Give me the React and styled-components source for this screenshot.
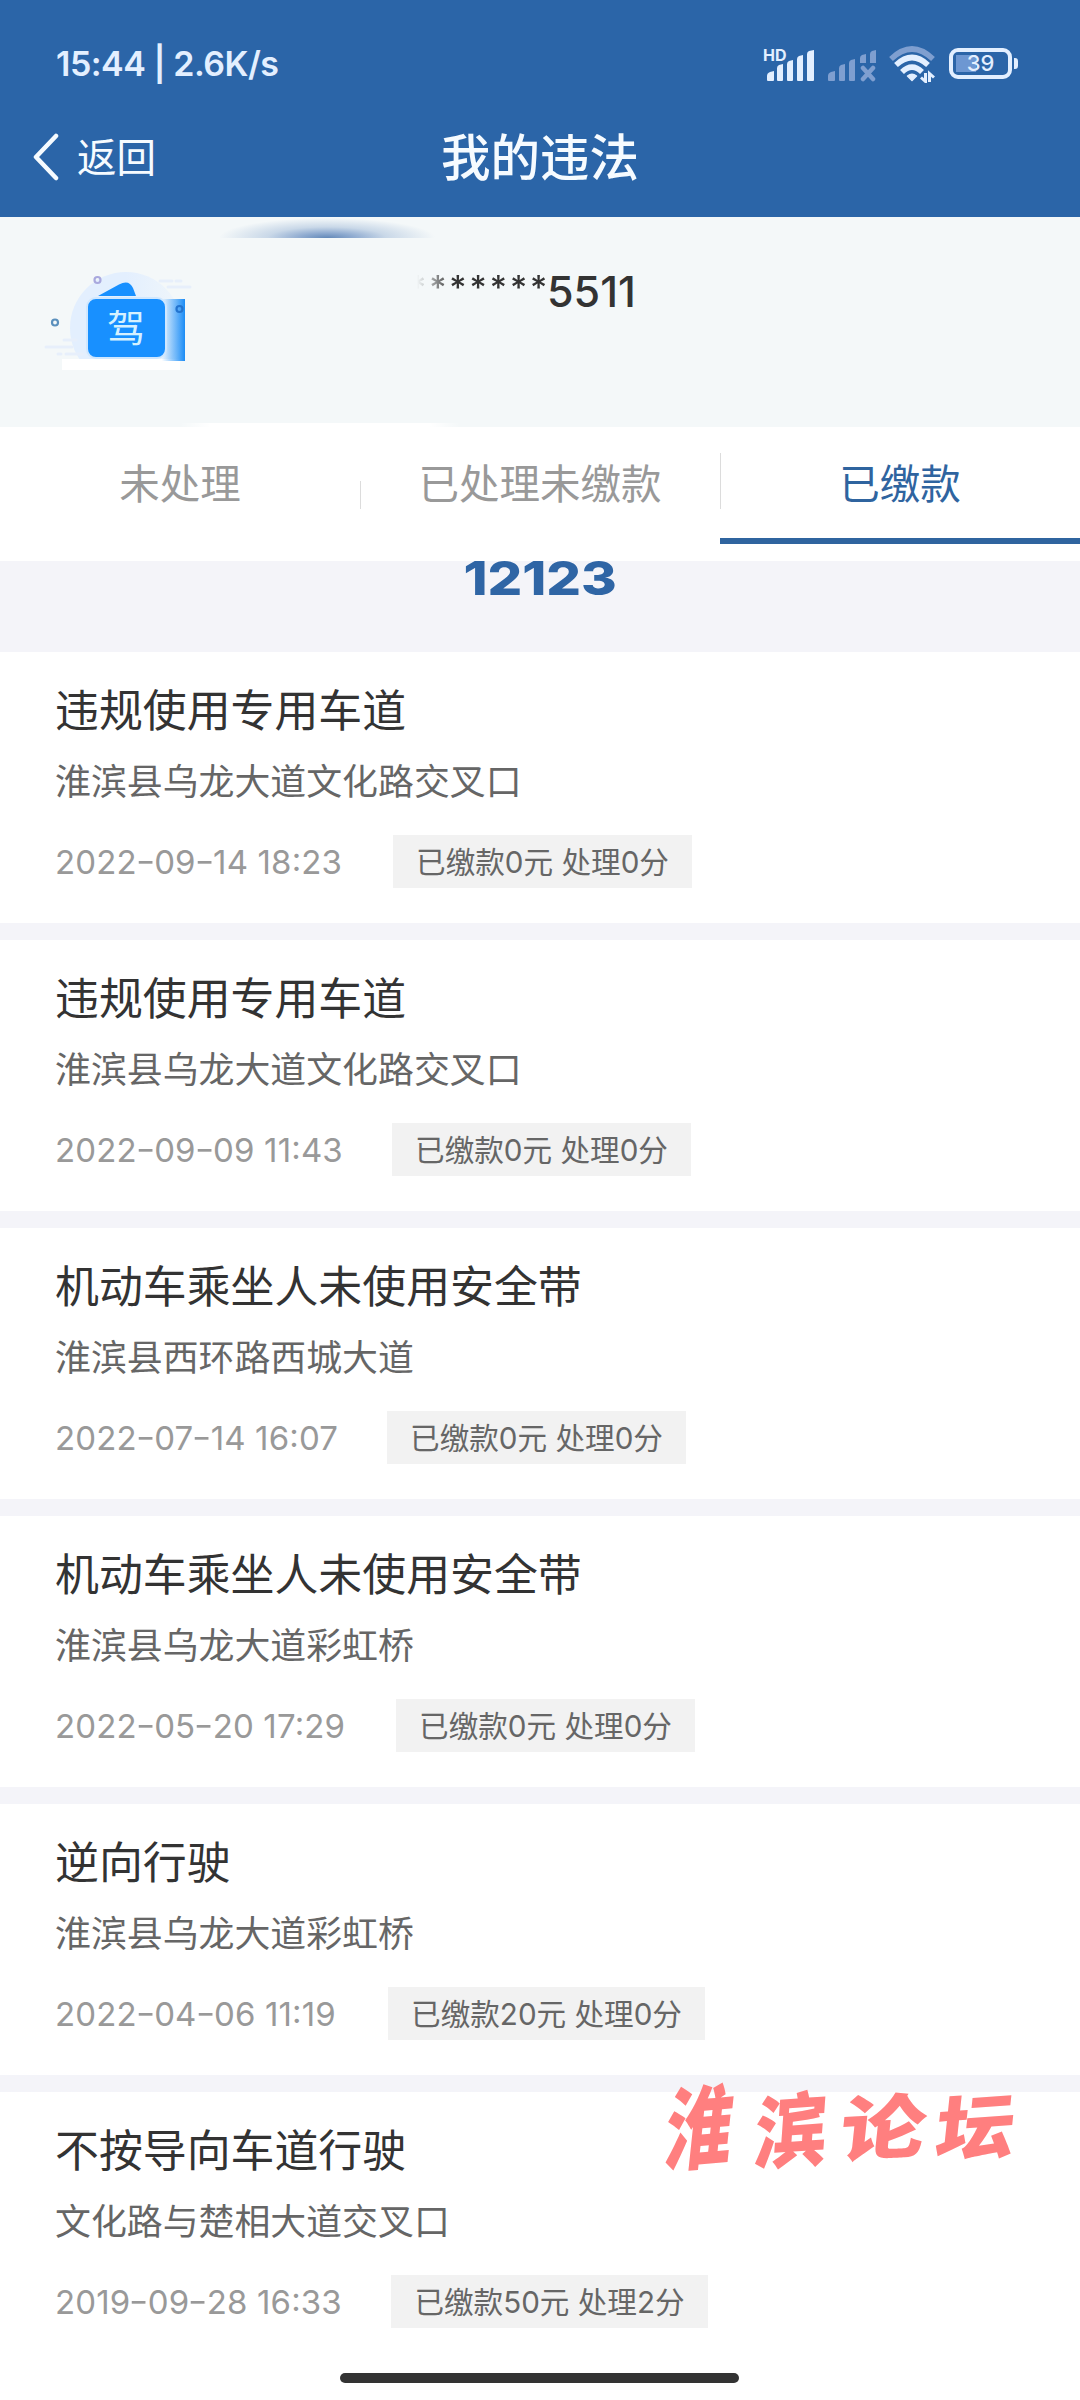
import styled, { createGlobalStyle } from "styled-components";

const violations = [
  {
    title: "违规使用专用车道",
    place: "淮滨县乌龙大道文化路交叉口",
    date: "2022-09-14 18:23",
    money: 0,
    points: 0,
    dateWidth: 337,
  },
  {
    title: "违规使用专用车道",
    place: "淮滨县乌龙大道文化路交叉口",
    date: "2022-09-09 11:43",
    money: 0,
    points: 0,
    dateWidth: 336,
  },
  {
    title: "机动车乘坐人未使用安全带",
    place: "淮滨县西环路西城大道",
    date: "2022-07-14 16:07",
    money: 0,
    points: 0,
    dateWidth: 331,
  },
  {
    title: "机动车乘坐人未使用安全带",
    place: "淮滨县乌龙大道彩虹桥",
    date: "2022-05-20 17:29",
    money: 0,
    points: 0,
    dateWidth: 340,
  },
  {
    title: "逆向行驶",
    place: "淮滨县乌龙大道彩虹桥",
    date: "2022-04-06 11:19",
    money: 20,
    points: 0,
    dateWidth: 332,
  },
  {
    title: "不按导向车道行驶",
    place: "文化路与楚相大道交叉口",
    date: "2019-09-28 16:33",
    money: 50,
    points: 2,
    dateWidth: 335,
  },
];

function Signal() {
  return (
    <svg width="52" height="36" viewBox="0 0 52 36" overflow="visible">
      <text x="0" y="14.500" fontFamily="Inter" fontSize="16" fontWeight="700" fill="#e3efff">HD</text>
      <g fill="#e3efff">
        <path d="M4 34v-4q0-3 3-4l4-1v9q0 1-1 1H5q-1 0-1-1z" />
        <path d="M14 34V22q0-2 2-3l4-1v16q0 1-1 1h-4q-1 0-1-1z" />
        <path d="M24 34V18q0-2 2-3l4-1v20q0 1-1 1h-4q-1 0-1-1z" />
        <path d="M34 34V13q0-2 2-3l4-1v25q0 1-1 1h-4q-1 0-1-1z" />
        <path d="M44 34V8q0-2 2-3l5-1v30q0 1-1 1h-5q-1 0-1-1z" />
      </g>
    </svg>
  );
}

function NoSignal() {
  return (
    <svg width="50" height="36" viewBox="0 0 50 36">
      <g fill="#7f9fd0">
        <path d="M1 34v-4q0-3 3-4l4-1v9q0 1-1 1H2q-1 0-1-1z" />
        <path d="M12 34V22q0-2 2-3l4-1v16q0 1-1 1h-4q-1 0-1-1z" />
        <path d="M22 34V17q0-2 2-3l4-1v21q0 1-1 1h-4q-1 0-1-1z" />
        <path d="M33 17v-5q0-2 2-3l4-1v9z" />
        <path d="M43 17V8q0-2 2-3l4-1v13z" />
      </g>
      <path d="M36 22l10 11M46 22L36 33" stroke="#7f9fd0" strokeWidth="4.500" strokeLinecap="round" />
    </svg>
  );
}

function Wifi() {
  return (
    <svg width="48" height="38" viewBox="0 0 48 38" fill="none">
      <path d="M2 14Q23-6 44 14" stroke="#7f9fd0" strokeWidth="5.500" />
      <path d="M7 20Q23 5 39 20" stroke="#e3efff" strokeWidth="5.500" />
      <path d="M13 27Q23 17 33 27" stroke="#e3efff" strokeWidth="5.500" />
      <path d="M18.500 31Q23 27.500 27.500 31L23 35.500z" fill="#e3efff" stroke="#e3efff" strokeWidth="1.500" strokeLinejoin="round" />
      <path d="M36.500 28v8.500l-4.500-4M40.500 37v-8.500l4.500 4" stroke="#e3efff" strokeWidth="3" />
    </svg>
  );
}

function LicenseArt() {
  return (
    <svg width="164" height="116" viewBox="36 262 164 116">
      <defs>
        <linearGradient id="smear" x1="0" x2="1">
          <stop offset="0.200" stopColor="#1890ff" stopOpacity="0" />
          <stop offset="1" stopColor="#1b8cf5" />
        </linearGradient>
        <linearGradient id="fade" x1="0" x2="1">
          <stop offset="0.500" stopColor="#e3effe" />
          <stop offset="0.900" stopColor="#e3effe" stopOpacity="0.400" />
        </linearGradient>
        <clipPath id="ground">
          <rect x="36" y="262" width="164" height="97" />
        </clipPath>
      </defs>
      <circle cx="126" cy="328" r="56" fill="url(#fade)" clipPath="url(#ground)" />
      <path d="M160 281h12M176 281h5M168 287h22M64 340h12M46 347h26M58 354h3M66 354h16" stroke="#e7effb" strokeWidth="3" strokeLinecap="round" />
      <rect x="62" y="359" width="118" height="11" fill="#fff" />
      <path d="M98 296L119 284.500Q129 279 133 288L136 296z" fill="#1890ff" />
      <rect x="156" y="299" width="29" height="62" fill="url(#smear)" />
      <rect x="87" y="298" width="79" height="60" rx="9" fill="#1890ff" stroke="#cfe7ff" strokeWidth="2" />
      <text x="107" y="342" fontFamily="Noto Sans CJK SC" fontSize="38" fill="#d5f1ff">驾</text>
      <g fill="none" strokeWidth="2.200">
        <circle cx="97.500" cy="280" r="3" stroke="#a9a9de" />
        <circle cx="55" cy="322.500" r="3" stroke="#5b90bd" />
        <circle cx="179.500" cy="309" r="3" stroke="#2374cf" />
      </g>
    </svg>
  );
}

function DateLabel({ date, width }) {
  const [year, month, rest] = date.split("-");
  return (
    <DateText $width={width}>
      {year}
      <i>-</i>
      {month}
      <i>-</i>
      {rest}
    </DateText>
  );
}

export default function App() {
  return (
    <Page>
      <GlobalStyle />
      <Header>
        <StatusBar>
          <Clock>15:44 | 2.6K/s</Clock>
          <StatusIcons>
            <Signal />
            <NoSignal />
            <Wifi />
            <Battery>
              <div className="body">39</div>
              <div className="tip" />
            </Battery>
          </StatusIcons>
        </StatusBar>
        <NavBar>
          <Back>
            <svg width="26" height="50" viewBox="0 0 26 50" fill="none">
              <path d="M23 4L3 25L23 46" stroke="#f6fbff" strokeWidth="4.500" strokeLinecap="round" strokeLinejoin="round" />
            </svg>
            <span>返回</span>
          </Back>
          <NavTitle>我的违法</NavTitle>
        </NavBar>
      </Header>
      <Driver>
        <Smudge />
        <LicenseArt />
        <LicenseNumber>
          <span className="stars">*******</span>
          <span>5511</span>
        </LicenseNumber>
        <Blob />
      </Driver>
      <Tabs>
        <Tab>未处理</Tab>
        <Tab $line="short">已处理未缴款</Tab>
        <Tab $line="long" $active>已缴款</Tab>
      </Tabs>
      <Brand>
        <span>12123</span>
      </Brand>
      <List>
        {violations.map((item) => (
          <Card key={item.date}>
            <h3>{item.title}</h3>
            <p>{item.place}</p>
            <Footer>
              <DateLabel date={item.date} width={item.dateWidth} />
              <Tag $wide={item.money > 9}>
                已缴款{item.money}元 处理{item.points}分
              </Tag>
            </Footer>
          </Card>
        ))}
      </List>
      <Watermark>
        <span>淮</span>
        <span>滨</span>
        <span>论</span>
        <span>坛</span>
      </Watermark>
      <HomeBar />
    </Page>
  );
}

const GlobalStyle = createGlobalStyle`
  body {
    margin: 0;
    background-color: #fff;
    font-family: Inter, "Noto Sans CJK SC", sans-serif;
  }
  * {
    box-sizing: border-box;
  }
  svg {
    flex-shrink: 0;
  }
`;

const Page = styled.div`
  position: relative;
  width: 1080px;
  height: 2400px;
  overflow: hidden;
  background-color: #fff;
`;

const Header = styled.div`
  height: 217px;
  background-color: #2b65a8;
  color: #f6fbff;
`;

const StatusBar = styled.div`
  display: flex;
  justify-content: space-between;
  align-items: center;
  height: 101px;
  padding: 26px 62px 0 56px;
`;

const Clock = styled.div`
  color: #e3efff;
  font-size: 34px;
  font-weight: 600;
  letter-spacing: -0.5px;
`;

const StatusIcons = styled.div`
  display: flex;
  align-items: center;
  gap: 12px;
`;

const Battery = styled.div`
  display: flex;
  align-items: center;
  gap: 2px;
  .body {
    width: 63px;
    height: 31px;
    border: 4px solid #e3efff;
    border-radius: 9px;
    background: linear-gradient(to right, #6d97d2 20px, transparent 20px) 3px 3px / 49px 17px no-repeat;
    color: #e3efff;
    font-size: 22px;
    font-weight: 500;
    line-height: 23px;
    text-align: center;
  }
  .tip {
    width: 4px;
    height: 11px;
    border-radius: 0 3px 3px 0;
    background-color: #e3efff;
  }
`;

const NavBar = styled.div`
  display: grid;
  grid-template-columns: 1fr auto 1fr;
  align-items: center;
  height: 112px;
  padding-left: 33px;
`;

const Back = styled.div`
  display: flex;
  align-items: center;
  gap: 18px;
  font-size: 39.5px;
  line-height: 50px;
  span {
    padding-top: 2px;
  }
`;

const NavTitle = styled.div`
  margin-right: 33px;
  padding-bottom: 5px;
  font-size: 49.5px;
  font-weight: 500;
`;

const Driver = styled.div`
  position: relative;
  display: flex;
  height: 210px;
  padding: 45px 0 0 36px;
  background-color: #f4f8f9;
`;

const Smudge = styled.div`
  position: absolute;
  left: 195px;
  top: 0;
  width: 240px;
  height: 21px;
  background: radial-gradient(
    ellipse 108px 20px at 132px 100%,
    #6288b8,
    #8fabd0 25%,
    #c9d8e8 55%,
    rgba(244, 248, 249, 0) 100%
  );
`;

const Blob = styled.div`
  position: absolute;
  left: 180px;
  bottom: 0;
  width: 280px;
  height: 4px;
  background: linear-gradient(to right, transparent, #fff 30px, #fff 250px, transparent);
`;

const LicenseNumber = styled.div`
  display: flex;
  margin-left: 210px;
  color: #333;
  font-size: 43px;
  font-weight: 500;
  line-height: 58px;
  .stars {
    width: 138px;
    margin-left: -1px;
    font-size: 33px;
    line-height: 50px;
    letter-spacing: 3px;
    white-space: nowrap;
    mask-image: linear-gradient(to right, transparent 8px, #000 44px);
  }
`;

const Tabs = styled.div`
  display: grid;
  grid-template-columns: repeat(3, 360px);
  height: 134px;
  background-color: #fff;
`;

const Tab = styled.div`
  height: 117px;
  padding-top: 29px;
  border-bottom: 6px solid ${(props) => (props.$active ? "#2f649f" : "transparent")};
  background: linear-gradient(#dcdcdc, #dcdcdc) no-repeat;
  background-position: 0 ${(props) => (props.$line === "long" ? "26px" : "54px")};
  background-size: ${(props) => (props.$line ? "1px" : "0")} ${(props) => (props.$line === "long" ? "56px" : "28px")};
  color: ${(props) => (props.$active ? "#2f649f" : "#999")};
  font-size: 40.5px;
  line-height: 58px;
  text-align: center;
`;

const Brand = styled.div`
  display: flex;
  justify-content: center;
  height: 91px;
  background-color: #f4f4f9;
  color: #2f65a5;
  font-size: 47px;
  font-weight: 800;
  line-height: 34px;
  span {
    transform: scaleX(1.16);
  }
`;

const List = styled.div`
  display: flex;
  flex-direction: column;
  gap: 17px;
  background-color: #f4f4f9;
`;

const Card = styled.div`
  height: 271px;
  padding: 27px 55px 0;
  background-color: #fff;
  &:last-child {
    height: 308px;
  }
  h3 {
    margin: 0;
    color: #333;
    font-size: 43.9px;
    font-weight: 400;
    line-height: 65px;
  }
  p {
    margin: 11px 0 0;
    color: #666;
    font-size: 35.9px;
    line-height: 54px;
  }
`;

const Footer = styled.div`
  display: flex;
  align-items: center;
  height: 53px;
  margin-top: 26px;
`;

const DateText = styled.div`
  width: ${(props) => props.$width + 1}px;
  color: #999;
  font-size: 33px;
  font-feature-settings: "case";
  letter-spacing: 0.15px;
  white-space: nowrap;
  i {
    display: inline-block;
    margin: 0 1px;
    font-style: normal;
    transform: scaleX(1.3);
  }
`;

const Tag = styled.div`
  width: ${(props) => (props.$wide ? 317 : 299)}px;
  height: 53px;
  background-color: #f2f2f2;
  color: #666;
  font-size: 29.6px;
  line-height: 55px;
  text-align: center;
  white-space: nowrap;
`;

const Watermark = styled.div`
  position: absolute;
  left: 660px;
  top: 2078px;
  display: flex;
  gap: 13px;
  color: #ff7f7f;
  font-size: 79px;
  font-weight: 800;
  line-height: 100px;
  span:nth-child(1) {
    transform: skew(-6deg, -5deg) scale(0.85, 1.15);
  }
  span:nth-child(2) {
    transform: skew(-4deg, -4deg) scale(0.92, 1.03) translateY(3px);
  }
  span:nth-child(3) {
    transform: skew(-6deg, -3deg) scale(1.08, 0.9);
  }
  span:nth-child(4) {
    transform: skew(-6deg, -4deg) scale(1, 0.9);
  }
`;

const HomeBar = styled.div`
  position: absolute;
  left: 340px;
  top: 2373px;
  width: 399px;
  height: 10px;
  border-radius: 5px;
  background-color: #333;
`;
